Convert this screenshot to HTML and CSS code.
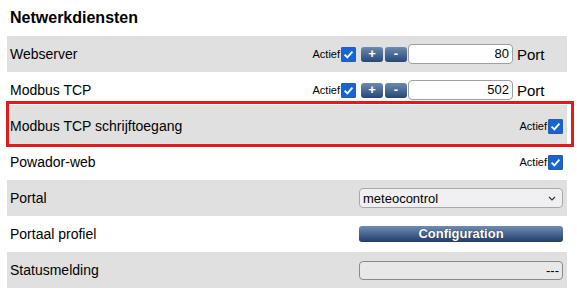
FILE: index.html
```html
<!DOCTYPE html>
<html>
<head>
<meta charset="utf-8">
<link rel="stylesheet" href="styles.css">
</head>
<body>
<div class="page">
  <h1 class="title">Netwerkdiensten</h1>
  <div class="rows">
    <div class="row gray">
      <span class="label">Webserver</span>
      <div class="ctrls">
        <span class="actief">Actief</span><span class="cb"><svg viewBox="0 0 14 14" width="14" height="14"><path d="M2.8 7.2 L5.8 10.2 L11.2 3.8" fill="none" stroke="#fff" stroke-width="2"/></svg></span>
        <span class="btn">+</span><span class="btn">-</span>
        <span class="num">80</span><span class="port">Port</span>
      </div>
    </div>
    <div class="row">
      <span class="label">Modbus TCP</span>
      <div class="ctrls">
        <span class="actief">Actief</span><span class="cb"><svg viewBox="0 0 14 14" width="14" height="14"><path d="M2.8 7.2 L5.8 10.2 L11.2 3.8" fill="none" stroke="#fff" stroke-width="2"/></svg></span>
        <span class="btn">+</span><span class="btn">-</span>
        <span class="num">502</span><span class="port">Port</span>
      </div>
    </div>
    <div class="row gray hl">
      <span class="label">Modbus TCP schrijftoegang</span>
      <div class="ctrls end">
        <span class="actief">Actief</span><span class="cb"><svg viewBox="0 0 14 14" width="14" height="14"><path d="M2.8 7.2 L5.8 10.2 L11.2 3.8" fill="none" stroke="#fff" stroke-width="2"/></svg></span>
      </div>
    </div>
    <div class="row">
      <span class="label">Powador-web</span>
      <div class="ctrls end">
        <span class="actief">Actief</span><span class="cb"><svg viewBox="0 0 14 14" width="14" height="14"><path d="M2.8 7.2 L5.8 10.2 L11.2 3.8" fill="none" stroke="#fff" stroke-width="2"/></svg></span>
      </div>
    </div>
    <div class="row gray">
      <span class="label">Portal</span>
      <div class="ctrls end">
        <div class="select"><span>meteocontrol</span><svg viewBox="0 0 8 5" width="8" height="5"><path d="M1 1 L4 4 L7 1" fill="none" stroke="#333" stroke-width="1.2"/></svg></div>
      </div>
    </div>
    <div class="row">
      <span class="label">Portaal profiel</span>
      <div class="ctrls end">
        <div class="cfg">Configuration</div>
      </div>
    </div>
    <div class="row gray">
      <span class="label">Statusmelding</span>
      <div class="ctrls end">
        <div class="status">---</div>
      </div>
    </div>
  </div>
</div>
</body>
</html>
```
FILE: styles.css
```css
html, body {
  margin: 0;
  padding: 0;
  background: #fff;
}
.page {
  padding: 0 0 0 7px;
  width: 560px;
  font-family: "Liberation Sans", Arial, sans-serif;
  color: #000;
}
.title {
  margin: 0;
  padding: 8px 0 0 3px;
  height: 28px;
  font-size: 16px;
  line-height: 20px;
  font-weight: bold;
  box-sizing: border-box;
}
.rows {
  margin-top: 8px;
}
.row {
  height: 36px;
  display: flex;
  align-items: center;
  padding-left: 3px;
  font-size: 14px;
}
.row.gray {
  background: #e0e0e0;
}
.hl {
  position: relative;
  box-shadow: 0 -3px 0 #e0e0e0;
}
.hl::after {
  content: "";
  position: absolute;
  top: -7px;
  bottom: -3px;
  left: -1px;
  right: -7px;
  border: 3px solid #e01b1b;
  pointer-events: none;
}
.label {
  flex: 1;
}
.ctrls {
  display: flex;
  align-items: center;
}
.ctrls.end {
  padding-right: 4px;
}
.actief {
  font-size: 11px;
  margin-right: 1px;
}
.cb {
  width: 15px;
  height: 15px;
  box-sizing: border-box;
  background: #1466d8;
  border: 1px solid #2f5d9a;
  border-radius: 1px;
  display: flex;
  align-items: center;
  justify-content: center;
}
.cb svg {
  display: block;
  width: 13px;
  height: 13px;
}
.btn {
  width: 22px;
  height: 15px;
  margin-left: 2px;
  border-radius: 3px;
  background: linear-gradient(#6d8bb0, #264676);
  color: #fff;
  font-weight: bold;
  font-size: 13px;
  line-height: 14px;
  text-align: center;
}
.btn:first-of-type {
  margin-left: 0;
}
.cb + .btn {
  margin-left: 5px;
}
.num {
  width: 105px;
  height: 20px;
  margin-left: 1px;
  box-sizing: border-box;
  border: 1px solid #a0a0a0;
  border-radius: 4px;
  background: #fff;
  text-align: right;
  font-size: 13px;
  line-height: 18px;
  padding-right: 3px;
}
.port {
  width: 50px;
  margin-left: 4px;
  font-size: 15px;
}
.select {
  width: 204px;
  height: 20px;
  box-sizing: border-box;
  border: 1px solid #a8a8a8;
  border-radius: 4px;
  background: #f0f0f2;
  display: flex;
  align-items: center;
  justify-content: space-between;
  padding: 0 6px 0 3px;
  font-size: 13px;
}
.cfg {
  width: 204px;
  height: 16px;
  border-radius: 3px;
  background: linear-gradient(#6f8db2, #1f3c6c);
  color: #fff;
  font-weight: bold;
  font-size: 13px;
  line-height: 16px;
  text-align: center;
  text-shadow: 0 0 1px #0c1f3f;
}
.status {
  width: 204px;
  height: 19px;
  box-sizing: border-box;
  border: 1px solid #8a8a8a;
  border-radius: 4px;
  background: #e8e8e8;
  text-align: right;
  font-size: 13px;
  line-height: 17px;
  padding-right: 3px;
}
```
